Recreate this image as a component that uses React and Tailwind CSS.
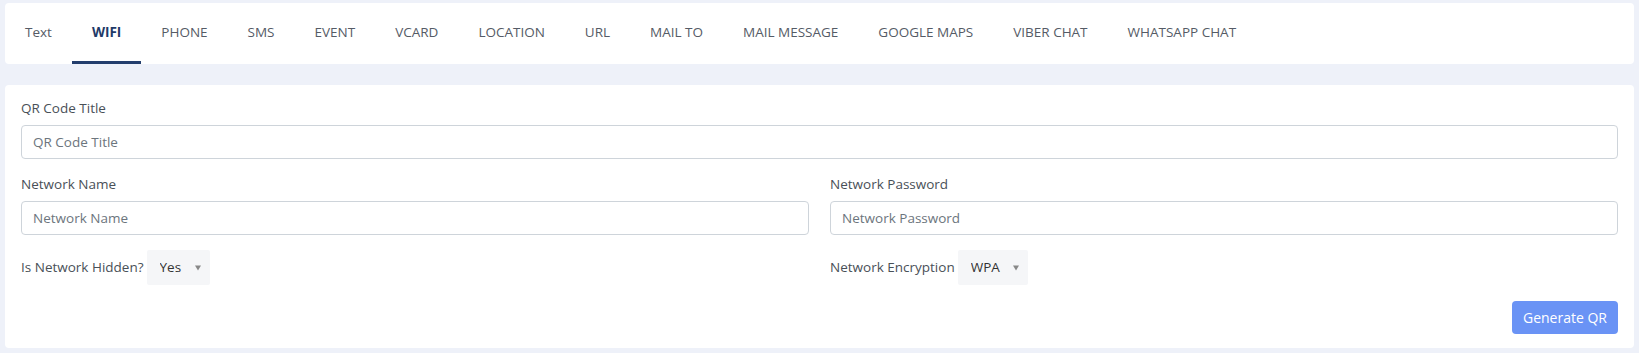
import React, { useState } from 'react';

const tabs = [
  'Text',
  'WIFI',
  'PHONE',
  'SMS',
  'EVENT',
  'VCARD',
  'LOCATION',
  'URL',
  'MAIL TO',
  'MAIL MESSAGE',
  'GOOGLE MAPS',
  'VIBER CHAT',
  'WHATSAPP CHAT',
];

const Field = ({ label, placeholder }) => (
  <div className="flex flex-col">
    <label className="text-[13.5px] leading-[21px] text-[#495057] mb-[6px]">{label}</label>
    <input
      className="h-[34px] w-full rounded-[4px] border border-[#ced4da] bg-white px-[11px] text-[13.5px] text-[#495057] placeholder:text-[#6c757d] outline-none"
      placeholder={placeholder}
    />
  </div>
);

const InlineSelect = ({ label, value, options, width }) => (
  <div className="flex items-center">
    <span className="text-[13.5px] text-[#495057] mr-[3px]">{label}</span>
    <div className={`relative h-[35px] ${width} rounded-[2px] bg-[#f5f6f8]`}>
      <select
        defaultValue={value}
        className="h-full w-full appearance-none bg-transparent pl-[13px] pr-6 text-[13.5px] text-[#333] outline-none"
      >
        {options.map((o) => (
          <option key={o}>{o}</option>
        ))}
      </select>
      <span className="pointer-events-none absolute right-[9px] top-1/2 -translate-y-1/2 h-0 w-0 border-x-[3.5px] border-t-[5px] border-x-transparent border-t-[#888]" />
    </div>
  </div>
);

const App = () => {
  const [active, setActive] = useState('WIFI');

  return (
    <div className="min-h-screen bg-[#eef1f9] px-[5px] pt-[3px] pb-[6px] font-['Open_Sans',sans-serif]">
      <div className="flex h-[61px] rounded-[4px] bg-white">
        {tabs.map((t) => (
          <button
            key={t}
            onClick={() => setActive(t)}
            className={
              t === active
                ? 'flex items-center px-5 border-b-[3px] border-[#233e6d] text-[13.5px] font-bold text-[#1f3a68]'
                : 'flex items-center px-5 border-b-[3px] border-transparent text-[13.5px] text-[#555b66]'
            }
          >
            {t}
          </button>
        ))}
      </div>

      <div className="mt-[21px] rounded-[4px] bg-white px-4 pt-[13px] pb-[14px]">
        <Field label="QR Code Title" placeholder="QR Code Title" />
        <div className="mt-[15px] grid grid-cols-2 gap-x-[21px]">
          <Field label="Network Name" placeholder="Network Name" />
          <Field label="Network Password" placeholder="Network Password" />
        </div>
        <div className="mt-[15px] grid grid-cols-2 gap-x-[21px]">
          <InlineSelect label="Is Network Hidden?" value="Yes" options={['Yes', 'No']} width="w-[63px]" />
          <InlineSelect label="Network Encryption" value="WPA" options={['WPA', 'WEP', 'None']} width="w-[70px]" />
        </div>
        <div className="mt-4 flex justify-end">
          <button className="h-[33px] rounded-[4px] bg-[#6a93f5] px-[11px] text-[14px] text-white">
            Generate QR
          </button>
        </div>
      </div>
    </div>
  );
};

export default App;
